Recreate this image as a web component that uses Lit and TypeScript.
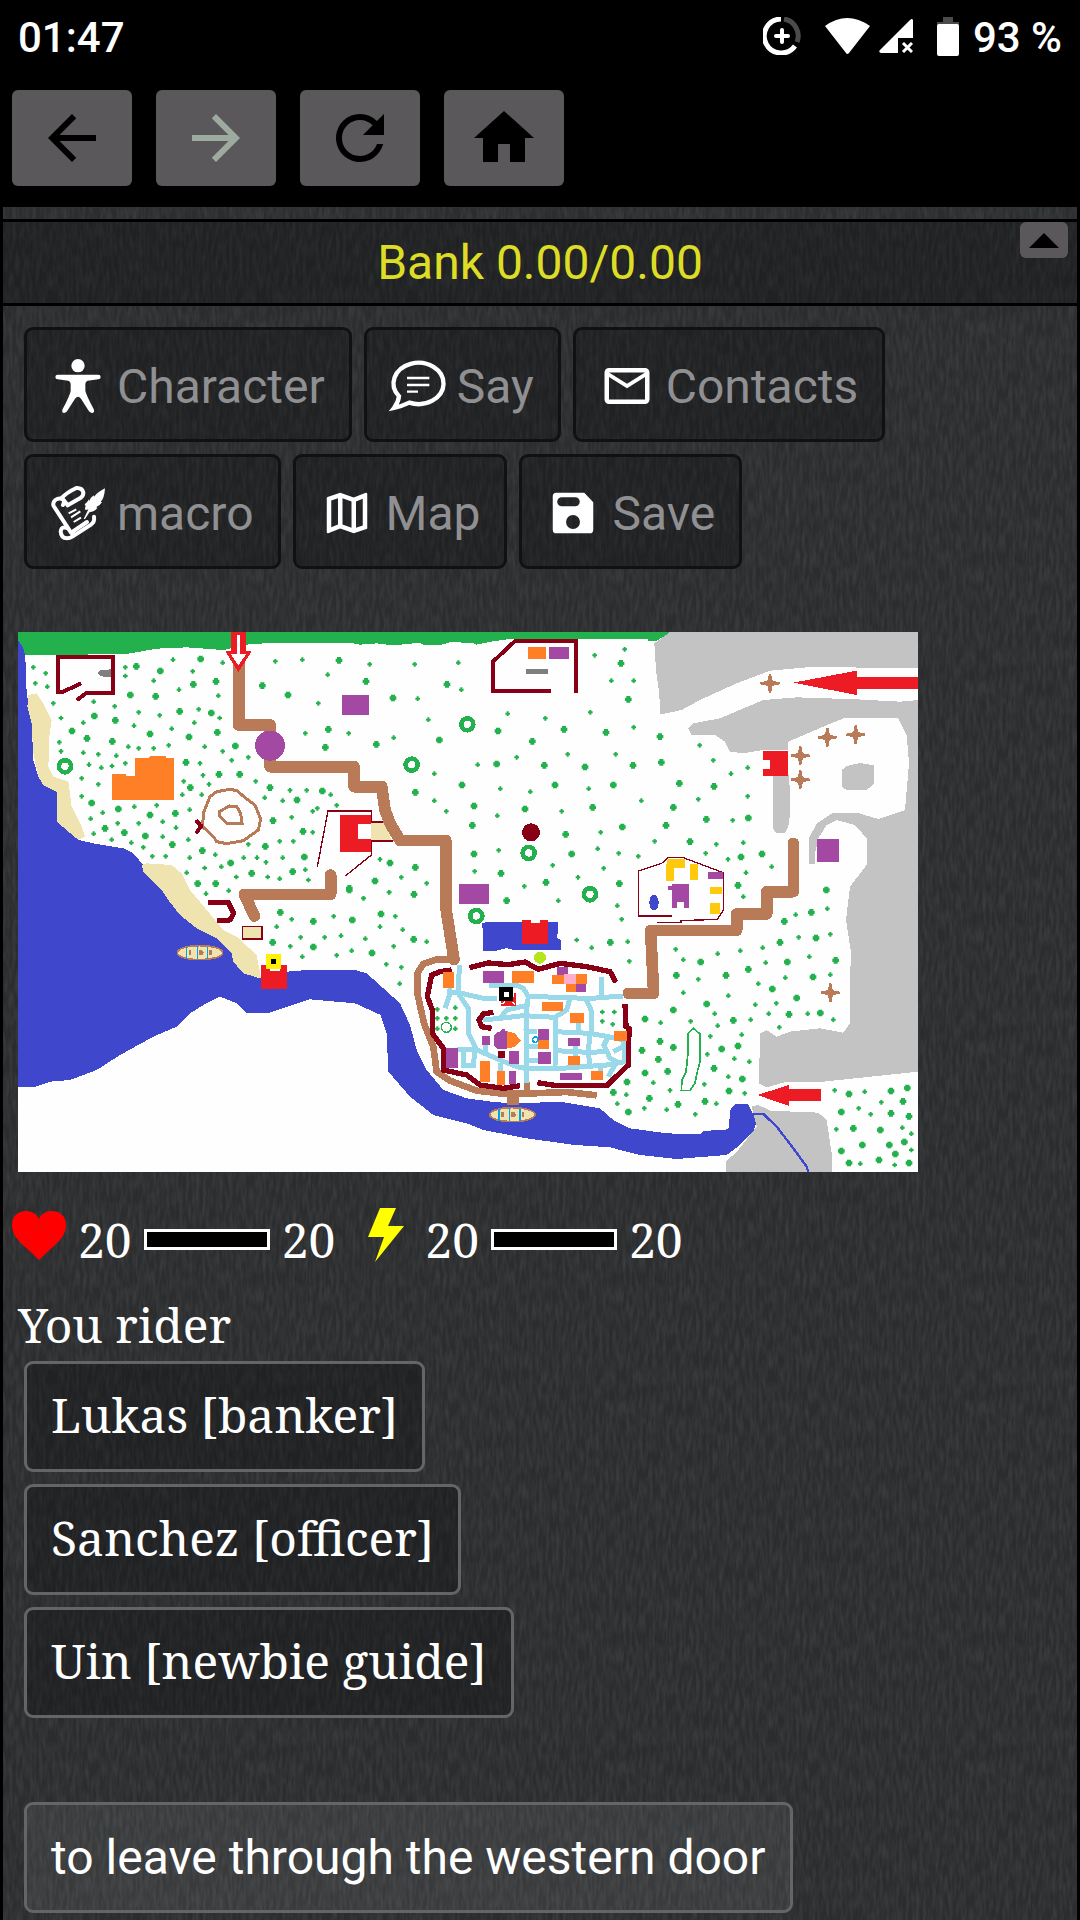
import { LitElement, html, svg, css } from "lit";
import { customElement, property } from "lit/decorators.js";

type Patch = { dx: number; dy: number; big: string; small: string };

const GREEN = "#22b14c";
const BROWN = "#b97a57";
const MAROON = "#880015";
const SAND = "#efe4b0";
const SEA = "#3f48cc";
const ROCK = "#c3c3c3";
const PURPLE = "#a349a4";
const ORANGE = "#ff7f27";
const RED = "#ed1c24";
const WATER = "#99d9ea";
const GOLD = "#ffc90e";

/* Trees, grouped by map sheet; each sheet has its own origin. */
const TREES: Patch[] = [
  {
    dx: 0, dy: 0,
    big: "379,139 451,153 572,117 550,193 618,184 361,225 437,229 253,288 316,301 509,274 604,279 186,333 231,355 420,342 537,351 622,337 307,364 676,378 528,427 541,503 627,463 689,463 780,503 861,540 789,602 879,634 245,549 325,567 420,585 496,580 285,625 343,638 406,648 487,674 577,692 662,729 725,760 766,679 883,711 848,755 563,791 617,791 757,197 834,225",
    small: "70,142 107,160 76,190 112,200 130,250 153,294 346,142 346,168 489,119 548,154 431,182 507,209 625,227 638,128 796,124 877,119 251,245 314,259 386,277 449,286 566,268 629,294 553,308 220,308 372,317 485,326 886,340 925,250 148,367 153,394 220,398 265,403 319,407 355,380 386,385 431,385 476,376 584,380 638,394 715,412 665,421 346,430 237,434 274,443 306,438 570,430 215,475 265,493 579,466 521,484 597,493 517,524 575,524 737,484 764,533 818,542 840,511 890,511 215,529 278,578 373,560 440,556 539,569 242,596 323,610 386,610 458,605 498,623 251,641 305,659 364,668 400,682 458,650 535,659 427,709 467,709 539,713 616,704 715,673 530,758 584,744 634,740 679,771 701,713 741,713 768,727 818,713 809,664 850,664 845,592 773,771 809,776 886,749 895,780 588,821 656,812",
  },
  {
    dx: 900, dy: 0,
    big: "87,121 168,184 249,234 411,193 55,328 199,373 388,360 46,382 37,513 316,517 456,495 560,432 564,333 667,364 762,328 703,436 825,441 888,337 735,495 645,567 848,562 492,558 487,616 492,702 767,643 785,702 573,760 708,787 240,729 316,742 195,783 118,805 312,823 590,842",
    small: "179,133 314,133 445,128 53,164 454,209 323,236 355,299 116,340 251,353 503,434 373,461 571,506 661,515 836,506 373,542 409,574 562,587 755,574 872,637 863,686 566,691 494,754 728,736 804,772 881,745 643,799 593,281 706,295 841,277 620,412 773,403 854,106 62,524 80,556 22,565 8,574 8,637 210,718 274,772 350,790 237,817 160,835 745,842",
  },
  {
    dx: 1800, dy: 0,
    big: "33,130 55,238 150,350 154,427 69,436 208,490 10,495 312,499 190,562 289,598 415,594 37,621 168,616 240,665 456,702 393,711 28,791 384,796 649,810",
    small: "44,88 71,182 4,182 71,322 269,376 17,403 310,421 363,461 413,443 94,542 265,538 413,529 368,601 134,664 26,700 85,709 319,673 400,668 287,700 354,718 485,740 408,758 400,830",
  },
  {
    dx: 0, dy: 810,
    big: "811,67 910,94 1027,90 1113,72 788,157 910,171 1086,189 1018,0",
    small: "845,88 971,79 800,110 872,142 944,142 993,137 841,169 877,200 980,196 1025,182 1066,146 1151,169 1156,79 1178,119 1110,110 1061,25 1138,7 1129,223 1174,232 1169,281",
  },
  {
    dx: 1170, dy: 930,
    big: "41,28 631,37",
    small: "80,35 530,30 575,53 112,238 166,233 112,265 139,265 166,265 112,296 166,296 607,246 643,246 607,274 638,283",
  },
  {
    dx: 1800, dy: 810,
    big: "199,256 272,216 348,256 415,238 510,157 523,94 604,67 618,144 532,216 609,261 677,211 487,297 560,324 290,342 190,360 105,387 370,391 537,373 631,369 150,454 190,472 96,481 145,508 335,477 384,468 173,544 105,549 312,535 51,576 10,607 118,625 204,643 285,634 357,603 397,567 55,666 717,612 843,603 892,594 879,634 694,666 843,670 897,679 730,715 811,720 757,765 838,765 883,756 856,792 694,783 807,810 717,819 897,819",
    small: "22,47 35,88 53,155 58,214 197,178 220,209 323,191 391,182 458,173 467,218 566,142 557,74 652,56 661,133 598,200 526,263 661,254 265,268 445,281 220,308 355,317 436,344 499,340 314,371 476,371 593,371 670,389 508,412 422,389 323,407 242,394 152,398 395,434 301,439 292,493 373,506 418,515 355,560 283,583 404,610 130,578 180,601 49,614 22,641 103,655 170,659 256,673 319,641 674,601 764,605 814,637 746,655 782,673 877,713 904,731 679,718 904,780 751,821 854,825",
  },
];

const RINGS = [[165, 439], [1372, 313], [1205, 434], [1556, 699], [1740, 823], [1399, 888]];
const STARS = [[2280, 190], [2452, 352], [2537, 344], [2371, 407], [2371, 479], [2461, 1118]];

/* Town buildings: x, y, width, height, colour. */
const HOUSES: [number, number, number, number, string][] = [
  [128, 126, 34, 47, ORANGE], [249, 123, 63, 36, PURPLE], [336, 123, 66, 36, ORANGE],
  [457, 136, 36, 25, ORANGE], [470, 110, 34, 26, PURPLE], [492, 132, 36, 30, "#ffaec9"],
  [527, 132, 33, 30, ORANGE], [498, 162, 30, 24, ORANGE], [527, 162, 32, 23, PURPLE],
  [425, 217, 63, 27, ORANGE], [511, 250, 40, 30, ORANGE], [641, 303, 40, 31, ORANGE],
  [505, 325, 36, 23, PURPLE], [505, 379, 36, 27, ORANGE], [479, 429, 67, 22, PURPLE],
  [573, 424, 35, 26, ORANGE], [415, 298, 32, 32, PURPLE], [415, 330, 32, 27, ORANGE],
  [415, 366, 37, 35, PURPLE], [245, 318, 26, 26, PURPLE], [294, 362, 22, 22, MAROON],
  [326, 362, 31, 40, PURPLE], [137, 353, 36, 61, PURPLE], [240, 393, 31, 62, ORANGE],
  [290, 424, 26, 40, ORANGE], [326, 424, 22, 37, PURPLE],
];

const points = (list: string) => list.split(" ").map((p) => p.split(",").map(Number));

const bigTrees = TREES.map((t) =>
  points(t.big).map(([x, y]) => `M${x + t.dx - 10} ${y + t.dy - 5}h4v-5h12v5h4v10h-4v5h-12v-5h-4z`).join("")
).join("");
const smallTrees = TREES.map((t) =>
  points(t.small).map(([x, y]) => `M${x + t.dx - 7} ${y + t.dy - 3}h4v-4h6v4h4v6h-4v4h-6v-4h-4z`).join("")
).join("");

const boat = (x: number, y: number) => svg`
  <g transform="translate(${x} ${y})">
    <ellipse rx="68" ry="21" fill=${SAND} stroke=${BROWN} stroke-width="5"/>
    <path d="M-34-8h8v15h-8zM-4-8h10l6 8-6 8h-10zM28-8h8v15h-8z" fill=${BROWN}/>
    <path d="M-40-18V18M-8-20V20M23-18V18" stroke="#00a2e8" stroke-width="4" fill="none"/>
  </g>`;

@customElement("world-map")
export class WorldMap extends LitElement {
  static styles = css`
    :host { display: block; }
    .map { display: block; width: 100%; height: auto; background: #fefefe; }
  `;

  render() {
    return html`
      <svg class="map" viewBox="24 36 2700 1620" role="img" aria-label="World map" shape-rendering="crispEdges">
        <g fill=${GREEN} shape-rendering="geometricPrecision">
          <path d=${bigTrees}/>
          <path d=${smallTrees}/>
        </g>
        <path fill=${GREEN} d="M24 36H1984L1940 62H1915V57H1500L1450 64 1400 74 1385 68 1320 67 1290 75H1240L1230 68 1150 76 1100 70 1050 74 1020 68H820L720 72 640 90 530 82 440 86 350 102 40 106 24 70Z"/>
        <path fill=${SEA} d="M24 60L40 85 46 110 50 220 65 310 70 420 85 470 100 495 140 515V605L205 660 250 670 340 685 370 700 400 735 455 810 475 840 510 885 560 925 620 955 665 1000 670 1025 700 1060 750 1075 800 1060 830 1055 890 1050H1035L1070 1060 1120 1105 1170 1150 1200 1215 1220 1290 1250 1350 1300 1410 1370 1435 1460 1447 1530 1450 1650 1445 1770 1465 1810 1500 1860 1525 1970 1540 2070 1543 2080 1533 2155 1528 2162 1465 2175 1453H2215L2225 1475 2242 1495 2232 1530 2190 1575 2150 1605 2000 1617 1890 1605 1800 1582 1695 1575 1550 1555 1420 1530 1370 1510 1270 1485 1200 1430 1135 1355 1130 1240 1112 1185 1035 1150 900 1138 780 1178 710 1178 680 1150 630 1130 580 1155 540 1180 500 1220 430 1250 330 1305 260 1350 180 1380 120 1385 70 1402H24Z"/>
        <path fill=${SAND} d="M55 225L80 220 100 250 125 300 118 350 115 440 130 470 175 485 185 560 215 620 225 650 205 660 140 605V515L100 495 85 470 70 400 65 310 52 260ZM395 735L410 730 485 735 515 760 540 810 590 870 640 930 680 950 740 1005 753 1075 700 1060 670 1025 665 1000 620 955 560 925 510 885 475 840 455 810 430 785 400 755Z"/>
        <path fill=${ROCK} d="M1980 36H2724V145L2500 142H2390L2280 152 2180 190 2070 240 2015 270 1955 283H1950L1948 220 1938 150 1933 70ZM2035 325L2050 310 2130 295 2200 265 2260 240 2360 232 2540 238 2670 245 2724 240V1355L2630 1365 2440 1385 2330 1385 2270 1402 2247 1390 2250 1240 2270 1230 2300 1250 2340 1235 2430 1225 2500 1238 2520 1210 2522 990 2508 900 2520 800 2570 735V655L2535 615 2480 600 2450 615 2425 655 2415 700V733H2397V655L2420 610 2470 578H2540L2605 597 2685 570 2697 430 2690 345 2665 295H2500L2440 320 2335 365V390H2260L2200 400 2160 395 2145 365 2115 345H2045ZM2288 460H2335L2341 520 2338 610 2325 640H2300L2288 625ZM2495 450L2510 438 2550 429 2593 436V490L2570 510H2510L2495 500ZM2225 1460L2245 1455 2280 1472 2425 1478 2450 1500 2465 1600 2467 1656H2148V1625L2185 1590 2240 1520Z"/>
        <path fill="none" stroke=${SEA} stroke-width="7" d="M2230 1482H2260L2300 1520 2350 1585 2390 1640 2395 1656"/>

        <g fill="none" stroke=${BROWN} stroke-width="35" stroke-linejoin="round" stroke-linecap="round">
          <path d="M686 120V315H780V440H1032V500H1115L1125 570 1140 610 1170 661H1307V860L1332 1018"/>
          <path d="M962 765V823H703L733 888"/>
          <path d="M2350 670V815H2270V882H2180V931H1922L1931 1120H1855"/>
        </g>
        <circle cx="780" cy="377" r="45" fill=${PURPLE}/>
        <g fill="none" stroke=${BROWN} stroke-width="9">
          <path d="M620 515L660 508 680 512 712 538 735 555 752 598 745 630 700 662 650 671 620 665 612 652 578 620 580 580 600 530Z"/>
          <path d="M628 575L658 558 680 560 692 580 696 610H650L630 590Z"/>
        </g>
        <g fill="none" stroke=${MAROON} stroke-width="12">
          <path d="M213 190L160 215 143 217V110H310V218H230L200 241"/>
          <path d="M558 600L573 619 558 640M573 619H580"/>
          <path d="M1622 214H1449V125L1515 63H1697V220"/>
          <path d="M595 848H655L671 880 660 900 622 902" stroke-width="15"/>
        </g>
        <path fill="#7f7f7f" d="M263 160L272 151 304 148V171L272 169ZM1549 148h64v14h-64z"/>
        <path fill=${ORANGE} d="M307 463H347V468H376V415H415L420 409H468V415H492V540H307ZM1554 81h54v36h-54z"/>
        <path fill=${PURPLE} d="M1617 81h59v36h-59zM996 225h81v59h-81zM1347 792h90v60h-90zM2422 657h64v68h-64z"/>
        <path fill=${RED} d="M663 36H708V92H726L685 157 645 92H663ZM2350 188L2540 152V170H2724V206H2540V225ZM2242 1425L2337 1395V1408H2432V1444H2337V1458ZM2260 392h73v76h-73v-22h20v-27h-20z"/>
        <path fill="#fff" d="M680 45H691V103H708L685 137 663 103H680Z"/>

        <path fill="none" stroke=${MAROON} stroke-width="4" d="M922 740L954 573H1084V705L1006 768"/>
        <path fill=${RED} d="M991 585H1083V612H1045V657H1083V697H991Z"/>
        <path fill=${SAND} d="M1083 607H1120L1145 660H1083Z"/>
        <path fill="none" stroke=${MAROON} stroke-width="6" d="M1083 607H1120M1083 662H1148"/>
        <circle cx="1563" cy="637" r="27" fill=${MAROON}/>
        ${RINGS.map(([x, y]) => svg`<circle cx=${x} cy=${y} r="18" fill="#fff" stroke=${GREEN} stroke-width="14"/>`)}
        ${STARS.map(([x, y]) => svg`<path transform="translate(${x} ${y})" fill=${BROWN} d="M-3-29H3L7-10 10-7 29-3V3L10 7 7 10 3 29H-3L-7 10-10 7-29 3V-3L-10-7-7-10Z"/>`)}

        <g fill="none" stroke=${MAROON} stroke-width="4">
          <path d="M1985 888H1885V753L1955 730 1975 713H2020L2140 758V870L2122 898 2013 902V907H1941"/>
          <rect x="697" y="920" width="59" height="37" fill=${SAND}/>
        </g>
        <path fill=${GOLD} d="M1973 717H2025V745H1991V782H1968V740ZM2040 733h23v46h-23zM2099 801h36v22h-36zM2099 850h31v31h-31z"/>
        <path fill=${PURPLE} d="M2094 757h46v21h-46zM1973 797H1987V792H2036V863H2022V847H2000V863H1986V810H1973Z"/>
        <ellipse cx="1932" cy="848" rx="14" ry="24" fill=${SEA}/>
        <path fill="none" stroke=${GREEN} stroke-width="5" d="M2050 1225L2070 1242V1325L2062 1355 2055 1390 2040 1411H2014L2016 1380 2028 1355 2034 1300V1240Z"/>

        ${boat(570, 998)} ${boat(1507, 1484)}
        <path fill=${RED} d="M753 1035H830V1107H753Z"/>
        <path fill="#fff" d="M773 1035H810V1052H780Z"/>
        <path fill="#fff200" d="M769 1003h43v43h-43z"/>
        <path d="M783 1016h15v15h-15z"/>

        <g transform="translate(1170 930)">
          <path fill="none" stroke=${BROWN} stroke-width="20" d="M160 88L110 88 70 102 52 130 52 190 72 280 100 350 110 425 150 452 230 482 300 490H400L500 486 590 496"/>
          <path fill=${BROWN} d="M321 490h35v35h-35zM371 455h18v35h-18z"/>
          <path fill=${SEA} d="M247 -20L260-24H370V-15H440V-24H474L472 25 482 30V60H340L320 54 290 62H250Z"/>
          <path fill=${RED} d="M367-30H393V-20H420V-30H443V42H367Z"/>
          <path fill="none" stroke=${WATER} stroke-width="15" d="M178 105L175 190 205 235V310L230 360 300 390 350 410 380 416H470L620 405 675 395 670 330 625 320 570 310 465 305M148 175L150 190 135 235M150 188H175L250 205H290M268 168L350 165 370 175 385 200 500 202 560 206 668 198M385 200L380 240 378 300V460M250 270L300 265 370 257 465 262 500 240 510 205M300 265L320 240 385 225M605 142V200M468 262L465 410M558 206L575 245 575 310M465 362L565 367 620 365M570 310L565 365 570 410M625 320L612 345 630 385 650 395 625 440M170 357L225 360 220 405 190 405 190 365M378 305H412M378 350H420M378 390H420M535 270V305M600 410V425M525 345V380M257 340V370M300 400V425M640 365L670 350"/>
          <g fill="none" stroke=${MAROON} stroke-width="16">
            <path d="M155 120L120 125 95 135 82 200 97 240V310L130 355V420L200 435 240 465 310 475 360 467"/>
            <path d="M208 113L265 99 325 104 375 96 415 118 480 100 560 110 630 125 648 157"/>
            <path d="M675 222L678 290 687 295 685 405 620 467H470L412 458"/>
            <path d="M280 247L250 252 237 270 245 290 275 295"/>
          </g>
          <circle cx="420" cy="83" r="18" fill="#b5e61d"/>
          ${HOUSES.map(([x, y, w, h, c]) => svg`<rect x=${x} y=${y} width=${w} height=${h} fill=${c}/>`)}
          <path fill=${PURPLE} d="M281 318L292 306 302 304 308 298H315V304H320V356H292L281 344Z"/>
          <path fill=${ORANGE} d="M320 303L345 310 362 332 345 350 320 356Z"/>
          <path fill=${RED} d="M303 190H348V228H303Z"/>
          <path fill="none" stroke="#fff" stroke-width="4" d="M305 222L315 215M335 215L345 224M340 190V200"/>
          <path d="M298 171h42v42h-42z"/>
          <path fill="#fff" d="M311 185h16v15h-16z"/>
          <circle cx="139" cy="292" r="15" fill="#fff" stroke=${GREEN} stroke-width="4"/>
          <circle cx="406" cy="329" r="8" fill="#fff" stroke="#00a2e8" stroke-width="4"/>
        </g>
      </svg>`;
  }
}

@customElement("stat-gauge")
export class StatGauge extends LitElement {
  @property() label = "";
  @property({ type: Number }) value = 0;
  @property({ type: Number }) max = 0;

  static styles = css`
    :host { display: flex; align-items: center; gap: 12px; line-height: 60px; }
    .icon { display: flex; width: 54px; height: 54px; margin-bottom: 9px; }
    .bar { box-sizing: border-box; width: 126px; height: 21px; border: 3px solid #fff; background: #000; }
  `;

  render() {
    return html`
      <span class="icon"><slot></slot></span>
      <span>${this.value}</span>
      <div class="bar" role="meter" aria-label=${this.label} aria-valuemin="0" aria-valuenow=${this.value} aria-valuemax=${this.max}></div>
      <span>${this.max}</span>`;
  }
}

const icons = {
  back: svg`<path d="M20 11H7.83l5.59-5.59L12 4l-8 8 8 8 1.41-1.41L7.83 13H20z"/>`,
  forward: svg`<path d="M12 4l-1.41 1.41L16.17 11H4v2h12.17l-5.58 5.59L12 20l8-8z"/>`,
  reload: svg`<path d="M17.65 6.35A7.96 7.96 0 0 0 12 4a8 8 0 1 0 7.73 10h-2.08A6 6 0 1 1 12 6c1.66 0 3.14.69 4.22 1.78L13 11h7V4z"/>`,
  home: svg`<path d="M10 20v-6h4v6h5v-8h3L12 3 2 12h3v8z"/>`,
};

const tools = [
  {
    label: "Character", box: "0 0 162 162",
    art: svg`<circle cx="81" cy="20" r="20"/><path d="M20 47H142a7 7 0 0 1 0 14L110 65Q103 67 103 75V95Q105 107 128 150Q132 160 124 162Q117 163 112 154L90 119Q81 108 72 119L50 154Q46 163 38 162Q31 160 35 150Q58 107 59 95V75Q59 67 52 65L20 61a7 7 0 0 1 0-14z"/>`,
  },
  {
    label: "Say", box: "0 0 162 162",
    art: svg`<path fill="none" stroke="currentColor" stroke-width="13" d="M24 112A75 62 0 1 1 55 131Q32 142 9 147Q22 130 24 112Z"/><path fill="none" stroke="currentColor" stroke-width="7" d="M48 57H115M48 78H115M48 98H81"/>`,
  },
  {
    label: "Contacts", box: "0 0 24 24",
    art: svg`<path fill-rule="evenodd" d="M20 4H4a2 2 0 0 0-2 2v12a2 2 0 0 0 2 2h16a2 2 0 0 0 2-2V6a2 2 0 0 0-2-2zm0 14H4V8l8 5 8-5zm-8-7L4 6h16z"/>`,
  },
  {
    label: "macro", box: "0 0 162 162",
    art: svg`<g fill="none" stroke="currentColor" stroke-width="12" stroke-linecap="round" stroke-linejoin="round">
      <path d="M36 57Q44 40 30 38Q46 20 76 6Q94 5 97 20Q97 30 88 36L50 58L36 40Q24 34 13 42Q4 50 8 60L60 140"/>
      <path d="M47 126Q32 120 29 136Q30 156 48 157Q56 157 64 152L120 116Q132 108 129 92"/>
      <path d="M65 150L66 136L108 108"/>
    </g>
    <path fill="none" stroke="currentColor" stroke-width="6" d="M53 82L76 70M60 94L88 76M68 108L90 95"/>
    <path d="M162 7Q160 38 149 47L153 49Q146 60 136 63L139 66Q130 78 116 78L102 99H98L112 70Q97 76 104 61L101 55Q110 48 114 40L115 45Q118 35 128 28L129 32Q140 18 162 7z"/>`,
  },
  {
    label: "Map", box: "0 0 24 24",
    art: svg`<path fill-rule="evenodd" d="M20.5 3l-.16.03L15 5.1 9 3 3.36 4.9a.5.5 0 0 0-.36.48V20.5a.5.5 0 0 0 .5.5l.16-.03L9 18.9l6 2.1 5.64-1.9a.5.5 0 0 0 .36-.48V3.5a.5.5 0 0 0-.5-.5zM10 5.47l4 1.4v11.66l-4-1.4zM5 6.46l3-1.01v11.7l-3 1.16zm14 11.08l-3 1.01V6.86l3-1.16z"/>`,
  },
  {
    label: "Save", box: "0 0 24 24",
    art: svg`<path fill-rule="evenodd" d="M4.600 3H17L21 7.200V19.400A1.600 1.600 0 0 1 19.400 21H4.600A1.600 1.600 0 0 1 3 19.400V4.600A1.600 1.600 0 0 1 4.600 3zM7 5a2 2 0 0 0 0 4H13a2 2 0 0 0 0-4zM12 12.900a3.100 3.100 0 1 0 0 6.200a3.100 3.100 0 0 0 0-6.200z"/>`,
  },
];

const people = ["Lukas [banker]", "Sanchez [officer]", "Uin [newbie guide]"];

@customElement("app-root")
export class AppRoot extends LitElement {
  static styles = css`
    :host {
      display: block;
      min-height: 100vh;
      background: #000;
      color: #fff;
      font: 48px/60px "Noto Serif", "DejaVu Serif Condensed", "DejaVu Serif", serif;
    }
    svg { display: block; fill: currentColor; }
    button { font: inherit; color: inherit; margin: 0; cursor: pointer; }
    .status {
      display: flex; align-items: center; justify-content: space-between;
      height: 72px; padding: 0 18px;
      font: 500 42px/64px Roboto, sans-serif;
    }
    .reading { padding-top: 4px; }
    .signals { display: flex; align-items: center; gap: 24px; }
    .radio { display: flex; align-items: center; gap: 9px; }
    .battery { display: flex; align-items: center; gap: 14px; }
    .nav { display: flex; gap: 24px; padding: 18px 12px 21px; }
    .nav-button {
      display: flex; align-items: center; justify-content: center;
      width: 120px; height: 96px; padding: 0; border: 0; border-radius: 6px;
      background: #5a585b; color: #000;
    }
    .nav-button:disabled { color: #9caaa0; cursor: default; }
    .nav-icon { width: 72px; height: 72px; }
    .page {
      margin: 0 3px; padding: 12px 0 7px;
      background-color: #2b2c2e;
      background-image: url("data:image/svg+xml,%3Csvg xmlns='http://www.w3.org/2000/svg' width='360' height='360'%3E%3Cfilter id='n' x='0' y='0' width='100%25' height='100%25'%3E%3CfeTurbulence type='fractalNoise' baseFrequency='.3 .06' numOctaves='2' seed='4' stitchTiles='stitch'/%3E%3CfeColorMatrix values='0 0 0 0 1 0 0 0 0 1 0 0 0 0 1 .14 0 0 0 -.045'/%3E%3C/filter%3E%3Crect width='360' height='360' filter='url(%23n)'/%3E%3C/svg%3E");
    }
    .bank {
      display: grid; grid-template-columns: 1fr auto 1fr; align-items: center;
      height: 81px; padding: 0 9px;
      border-top: 3px solid #000; border-bottom: 3px solid #000;
      background: rgba(0, 0, 0, 0.25);
      color: #dddd26; font-family: Roboto, sans-serif;
    }
    .bank-value { grid-column: 2; }
    .collapse {
      grid-column: 3; justify-self: end; align-self: start;
      display: flex; align-items: center; justify-content: center;
      width: 48px; height: 36px; padding: 0; border: 0; border-radius: 6px;
      background: #5a585b; color: #000;
    }
    .tools { display: flex; flex-wrap: wrap; gap: 12px; max-width: 900px; padding: 21px 21px 63px; }
    .tool {
      display: flex; align-items: center; gap: 12px;
      padding: 29px 24px 26px; border: 3px solid #111113; border-radius: 9px;
      background: rgba(0, 0, 0, 0.25);
      color: #fff; font-family: Roboto, sans-serif;
    }
    .tool-icon { width: 54px; height: 54px; }
    .tool-label { padding-top: 2px; color: #909092; line-height: 52px; }
    .map { max-width: 900px; margin: 0 15px; }
    .stats { display: flex; flex-wrap: wrap; gap: 24px; padding: 36px 9px 24px; }
    .heart { color: #f00; }
    .bolt { color: #ff0; }
    .you { margin: 0; padding: 0 15px 6px; font-weight: 400; font-size: inherit; line-height: 60px; }
    .list { display: flex; flex-direction: column; align-items: flex-start; gap: 12px; padding: 0 21px; }
    .exits { padding-top: 84px; }
    .choice {
      padding: 22px 24px 26px; border: 3px solid #656567; border-radius: 9px;
      background: rgba(0, 0, 0, 0.25); line-height: 57px;
    }
    .exit { padding: 24px; background: rgba(255, 255, 255, 0.07); font-family: Roboto, sans-serif; }
  `;

  private navButton(label: string, art: unknown, disabled = false) {
    return html`<button class="nav-button" aria-label=${label} ?disabled=${disabled}>
      <svg class="nav-icon" viewBox="0 0 24 24">${art}</svg>
    </button>`;
  }

  render() {
    return html`
      <header>
        <div class="status">
          <time class="reading">01:47</time>
          <div class="signals">
            <svg width="38" height="38" viewBox="0 0 38 38" fill="none" stroke="currentColor" stroke-width="5">
              <path fill="none" d="M18 2A17 17 0 1 0 32 29"/>
              <path fill="none" stroke="#4b4b4b" d="M21 2A17 17 0 0 1 34 25"/>
              <path stroke-width="4" stroke-linecap="round" d="M19 13V25M13 19H25"/>
            </svg>
            <div class="radio">
              <svg width="45" height="36" viewBox="0 0 45 36"><path d="M0 8Q22-8 45 8L24 35Q22 37 21 35Z"/></svg>
              <svg width="34" height="34" viewBox="0 0 34 34">
                <path d="M34 1V19H19V34H2Q-1 33 1 31L31 1Q33-1 34 1Z"/>
                <path stroke="currentColor" stroke-width="3" d="M24 24L33 33M33 24L24 33"/>
              </svg>
            </div>
            <div class="battery">
              <svg width="22" height="39" viewBox="0 0 22 39"><path fill="#4b4b4b" d="M6 0h10v5h6v3H0V5h6z"/><rect y="7" width="22" height="32" rx="2"/></svg>
              <span class="reading">93 %</span>
            </div>
          </div>
        </div>
        <nav class="nav">
          ${this.navButton("Back", icons.back)}
          ${this.navButton("Forward", icons.forward, true)}
          ${this.navButton("Reload", icons.reload)}
          ${this.navButton("Home", icons.home)}
        </nav>
      </header>
      <main class="page">
        <div class="bank">
          <span class="bank-value">Bank 0.00/0.00</span>
          <button class="collapse" aria-label="Collapse">
            <svg width="30" height="15" viewBox="0 0 30 15"><path d="M15 0L30 15H0z"/></svg>
          </button>
        </div>
        <div class="tools">
          ${tools.map((t) => html`<button class="tool">
            <svg class="tool-icon" viewBox=${t.box} overflow="visible">${t.art}</svg>
            <span class="tool-label">${t.label}</span>
          </button>`)}
        </div>
        <world-map class="map"></world-map>
        <div class="stats">
          <stat-gauge label="Health" value="20" max="20">
            <svg class="heart" width="54" height="54" viewBox="0 0 54 54"><path d="M27 52Q21 46 12 38C3 30 0 24 0 17C0 8 6 3 14 3C20 3 25 6 27 11C29 6 34 3 40 3C48 3 54 8 54 17C54 24 51 30 42 38Q33 46 27 52z"/></svg>
          </stat-gauge>
          <stat-gauge label="Energy" value="20" max="20">
            <svg class="bolt" width="54" height="54" viewBox="0 0 54 54"><path d="M21 0H37L29 18H45L16 54L25 29H9z"/></svg>
          </stat-gauge>
        </div>
        <h1 class="you">You rider</h1>
        <div class="list">
          ${people.map((p) => html`<button class="choice">${p}</button>`)}
        </div>
        <div class="list exits">
          <button class="choice exit">to leave through the western door</button>
        </div>
      </main>`;
  }
}
